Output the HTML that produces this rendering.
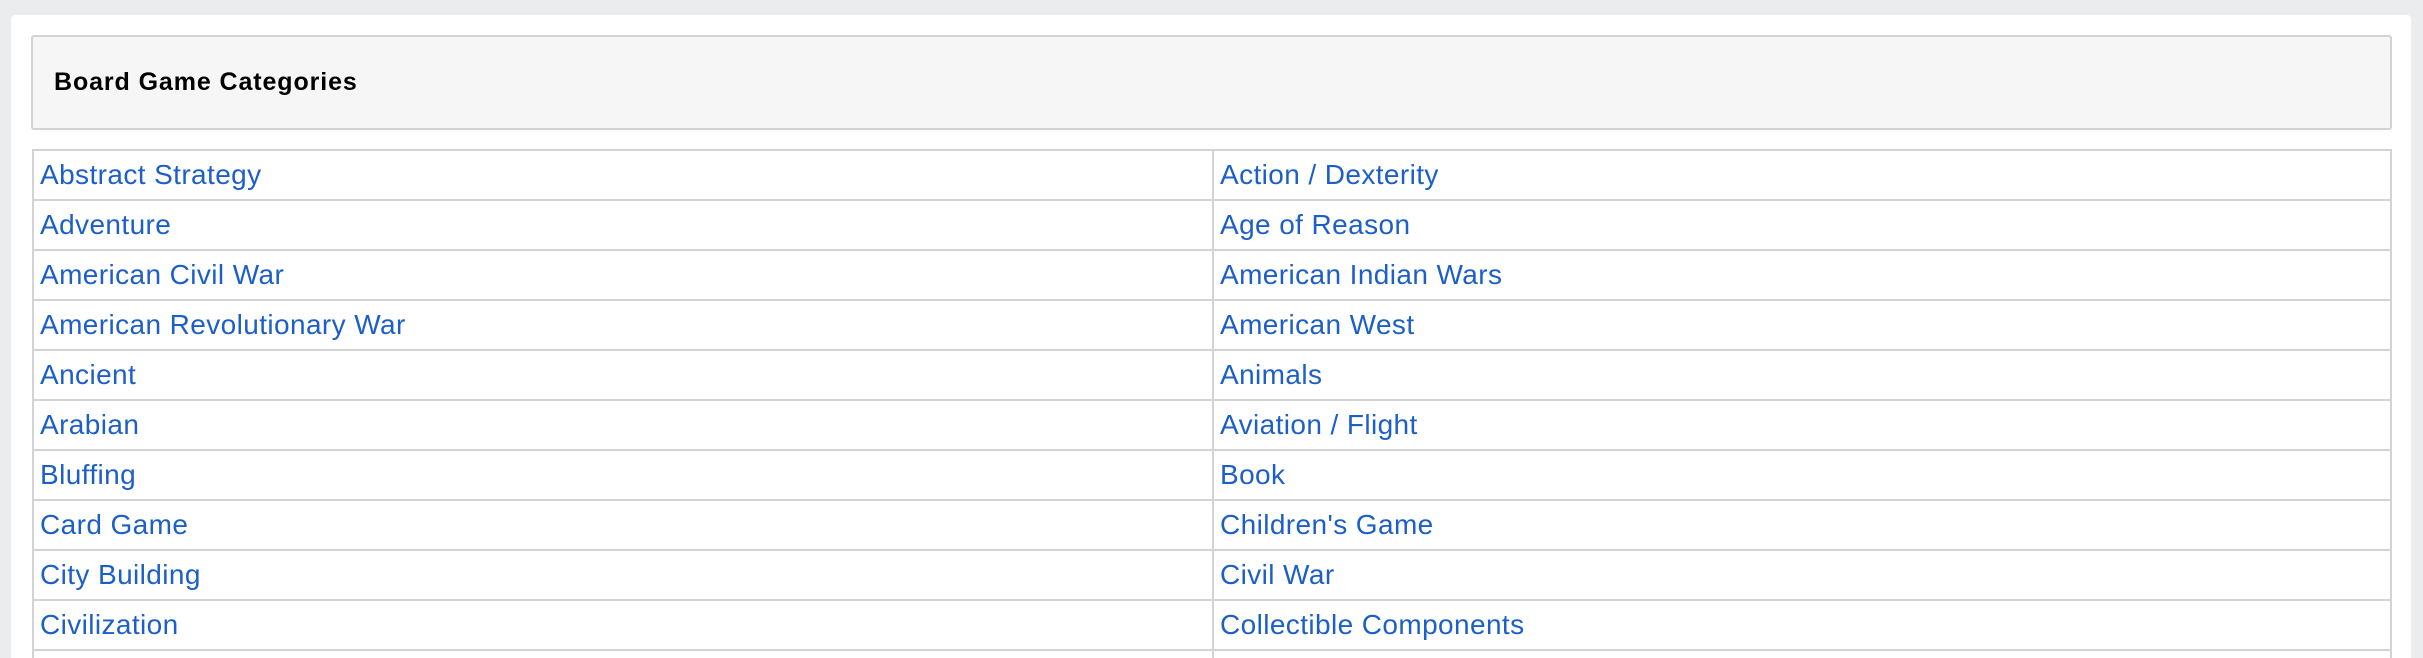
<!DOCTYPE html>
<html><head><style>
html,body{margin:0;padding:0;width:2423px;height:658px;overflow:hidden;background:#ebecee;font-family:"Liberation Sans",sans-serif}
.panel{position:absolute;left:11px;top:15px;width:2400px;height:643px;background:#fff;border-radius:4px 4px 0 0}
.hdr{position:absolute;left:31px;top:35px;width:2357px;height:91px;background:#f6f6f6;border:2px solid #d3d3d6;border-radius:3px}
.hdr span{position:absolute;left:21px;top:31px;font-weight:bold;font-size:25px;letter-spacing:0.9px;color:#000}
.row{position:absolute;left:32px;width:2356px;height:48px;border:2px solid #d3d3d6;border-bottom:none}
.row .d{position:absolute;left:1178px;top:0;width:2px;height:48px;background:#d3d3d6}
.row a{position:absolute;top:8px;font-size:28px;letter-spacing:0.4px;color:#1d5fc9;text-decoration:none;white-space:nowrap}
</style></head><body>
<div class="panel"></div>
<div class="hdr"><span>Board Game Categories</span></div>
<div class="row" style="top:149px"><a style="left:6px">Abstract Strategy</a><div class="d"></div><a style="left:1186px">Action / Dexterity</a></div>
<div class="row" style="top:199px"><a style="left:6px">Adventure</a><div class="d"></div><a style="left:1186px">Age of Reason</a></div>
<div class="row" style="top:249px"><a style="left:6px">American Civil War</a><div class="d"></div><a style="left:1186px">American Indian Wars</a></div>
<div class="row" style="top:299px"><a style="left:6px">American Revolutionary War</a><div class="d"></div><a style="left:1186px">American West</a></div>
<div class="row" style="top:349px"><a style="left:6px">Ancient</a><div class="d"></div><a style="left:1186px">Animals</a></div>
<div class="row" style="top:399px"><a style="left:6px">Arabian</a><div class="d"></div><a style="left:1186px">Aviation / Flight</a></div>
<div class="row" style="top:449px"><a style="left:6px">Bluffing</a><div class="d"></div><a style="left:1186px">Book</a></div>
<div class="row" style="top:499px"><a style="left:6px">Card Game</a><div class="d"></div><a style="left:1186px">Children's Game</a></div>
<div class="row" style="top:549px"><a style="left:6px">City Building</a><div class="d"></div><a style="left:1186px">Civil War</a></div>
<div class="row" style="top:599px"><a style="left:6px">Civilization</a><div class="d"></div><a style="left:1186px">Collectible Components</a></div>
<div class="row" style="top:649px;height:7px"><div class="d" style="height:7px"></div></div>
</body></html>
